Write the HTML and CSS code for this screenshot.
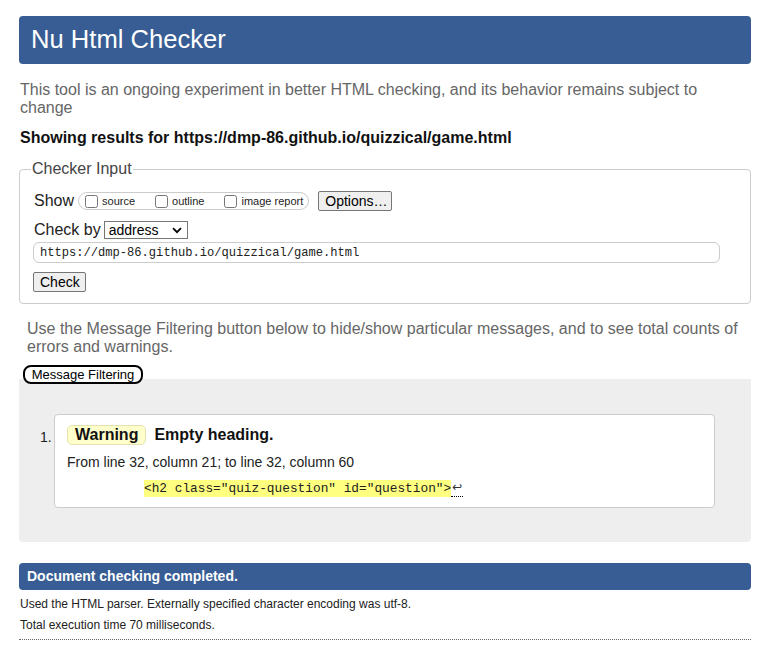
FILE: index.html
```html
<!DOCTYPE html>
<html lang="en">
<head>
<meta charset="utf-8">
<title>Nu Html Checker</title>
<link rel="stylesheet" href="styles.css">
</head>
<body>
<div class="page">
  <h1 class="title-bar">Nu Html Checker</h1>
  <p class="intro">This tool is an ongoing experiment in better HTML checking, and its behavior remains subject to change</p>
  <p class="showing">Showing results for https://dmp-86.github.io/quizzical/game.html</p>

  <fieldset class="checker">
    <legend class="checker-legend">Checker Input</legend>
    <div class="show-row">
      <span class="row-label">Show</span>
      <span class="opt-group">
        <label class="opt"><input type="checkbox" class="cb">source</label>
        <label class="opt"><input type="checkbox" class="cb">outline</label>
        <label class="opt opt-last"><input type="checkbox" class="cb">image report</label>
      </span>
      <button class="btn btn-options" type="button">Options…</button>
    </div>
    <div class="checkby-row">
      <span class="row-label">Check by</span>
      <span class="select-wrap">
        <select class="select"><option>address</option></select>
        <svg class="chevron" width="10" height="7" viewBox="0 0 10 7"><path d="M1 1.2 L5 5.2 L9 1.2" fill="none" stroke="#000" stroke-width="1.8"/></svg>
      </span>
    </div>
    <input class="url" type="text" value="https://dmp-86.github.io/quizzical/game.html">
    <button class="btn btn-check" type="button">Check</button>
  </fieldset>

  <p class="filter-note">Use the Message Filtering button below to hide/show particular messages, and to see total counts of errors and warnings.</p>
  <button class="filter-btn" type="button">Message Filtering</button>

  <div class="results">
    <div class="msg">
      <span class="num">1.</span>
      <div class="card">
        <div class="msg-head">
          <span class="badge">Warning</span>
          <span class="msg-text">Empty heading.</span>
        </div>
        <p class="location">From line 32, column 21; to line 32, column 60</p>
        <p class="extract"><code class="hl">&lt;h2 class="quiz-question" id="question"&gt;</code><span class="lf">↩</span></p>
      </div>
    </div>
  </div>

  <div class="done-bar">Document checking completed.</div>
  <p class="details">Used the HTML parser. Externally specified character encoding was utf-8.</p>
  <p class="details details-last">Total execution time 70 milliseconds.</p>
</div>
</body>
</html>
```

FILE: styles.css
```css
* { box-sizing: border-box; }

body {
  margin: 0;
  font-family: "Liberation Sans", Arial, sans-serif;
  color: #222;
  background: #fff;
}

.page {
  margin: 16px 10px 0 19px;
}

.title-bar {
  margin: 0;
  height: 48px;
  padding: 0 12px;
  background: #375d94;
  color: #fff;
  font-weight: normal;
  font-size: 25.6px;
  line-height: 46px;
  border-radius: 4px;
}

.intro {
  margin: 17px 0 0 1px;
  font-size: 16px;
  line-height: 18px;
  color: #666;
}

.showing {
  margin: 12px 0 0 1px;
  font-size: 16px;
  line-height: 18px;
  font-weight: bold;
  color: #111;
}

.checker {
  margin: 13px 0 0;
  padding: 0 13px 11px 13px;
  border: 1px solid #ccc;
  border-radius: 4px;
  min-width: 0;
}

.checker-legend {
  padding: 0 1px;
  font-size: 16px;
  line-height: 18px;
  color: #444;
  margin-left: -2px;
}

.show-row {
  display: flex;
  align-items: center;
  height: 22px;
  margin-top: 12px;
  margin-left: 1px;
}

.row-label {
  font-size: 16px;
  color: #222;
}

.opt-group {
  display: flex;
  align-items: center;
  height: 18px;
  margin-left: 4px;
  padding: 0 5px 0 6px;
  border: 1px solid #ccc;
  border-radius: 9px;
}

.opt {
  display: flex;
  align-items: flex-end;
  font-size: 11px;
  line-height: 13px;
  margin-right: 20px;
  color: #222;
}

.opt-last { margin-right: 0; }

.cb {
  width: 13px;
  height: 13px;
  margin: 0 4px 0 0;
}

.btn {
  font-family: "Liberation Sans", Arial, sans-serif;
  font-size: 14px;
  color: #000;
  background: #efefef;
  border: 1px solid #767676;
  border-radius: 2px;
  height: 20px;
  padding: 0 6px;
  line-height: 18px;
}

.btn-options {
  margin-left: 9px;
  width: 74px;
}

.checkby-row {
  display: flex;
  align-items: center;
  height: 22px;
  margin-top: 7px;
  margin-left: 1px;
}

.select-wrap {
  position: relative;
  display: inline-block;
  margin-left: 3px;
  height: 18px;
}

.select {
  appearance: none;
  -webkit-appearance: none;
  width: 84px;
  height: 18px;
  border: 1px solid #767676;
  border-radius: 0;
  background: #fff;
  font-family: "Liberation Sans", Arial, sans-serif;
  font-size: 14px;
  color: #000;
  padding: 0 0 0 4px;
  line-height: 16px;
  display: block;
}

.chevron {
  position: absolute;
  right: 6px;
  top: 6px;
  pointer-events: none;
}

.url {
  display: block;
  width: 687px;
  height: 21px;
  margin-top: 1px;
  padding: 0 6px;
  border: 1px solid #ccc;
  border-radius: 6px;
  font-family: "Liberation Mono", "DejaVu Sans Mono", monospace;
  font-size: 12.1px;
  color: #222;
}

.btn-check {
  display: block;
  margin-top: 9px;
  width: 53px;
}

.filter-note {
  margin: 16px 0 0;
  padding-left: 8px;
  font-size: 16px;
  line-height: 18px;
  color: #666;
}

.filter-btn {
  position: relative;
  z-index: 1;
  display: block;
  margin: 9px 0 -5px 4px;
  height: 19px;
  width: 120px;
  padding: 0;
  border: 2px solid #000;
  border-radius: 8px;
  background: #fff;
  font-family: "Liberation Sans", Arial, sans-serif;
  font-size: 13px;
  line-height: 15px;
  color: #000;
}

.results {
  background: #eee;
  padding: 35px 36px 34px 21px;
  border-radius: 0 0 4px 4px;
}

.msg {
  display: flex;
  align-items: flex-start;
}

.num {
  width: 14px;
  flex: none;
  font-size: 14px;
  line-height: 16px;
  margin-top: 15px;
  color: #222;
}

.card {
  flex: 1;
  background: #fff;
  border: 1px solid #ccc;
  border-radius: 4px;
  padding: 10px 12px 10px 12px;
}

.msg-head {
  display: flex;
  align-items: center;
  height: 20px;
}

.badge {
  display: inline-block;
  height: 20px;
  line-height: 18px;
  padding: 0 7px;
  background: #ffffcc;
  border: 1px solid #e6e2b0;
  border-radius: 5px;
  font-weight: bold;
  font-size: 16px;
  color: #111;
}

.msg-text {
  margin-left: 8px;
  font-weight: bold;
  font-size: 16px;
  color: #111;
}

.location {
  margin: 9px 0 0;
  font-size: 14px;
  line-height: 16px;
  color: #222;
}

.extract {
  margin: 10px 0 0;
  padding-left: 77px;
  height: 17px;
  display: flex;
  align-items: flex-start;
}

.hl {
  display: inline-block;
  background: #ffff80;
  font-family: "Liberation Mono", "DejaVu Sans Mono", monospace;
  font-size: 12.8px;
  line-height: 17px;
  color: #222;
  white-space: pre;
}

.lf {
  display: inline-block;
  height: 17px;
  line-height: 15px;
  font-family: "DejaVu Sans", sans-serif;
  font-size: 12px;
  border-bottom: 1px dotted #000;
  color: #333;
  padding: 0 1px;
}

.done-bar {
  margin-top: 21px;
  height: 27px;
  line-height: 27px;
  padding: 0 8px;
  background: #375d94;
  color: #fff;
  font-weight: bold;
  font-size: 14px;
  border-radius: 4px;
}

.details {
  margin: 7px 0 0 1px;
  font-size: 12px;
  line-height: 15px;
  color: #222;
}

.details-last {
  margin-top: 6px;
  margin-left: 0;
  padding-left: 1px;
  padding-bottom: 6px;
  border-bottom: 1px dotted #666;
}
```
